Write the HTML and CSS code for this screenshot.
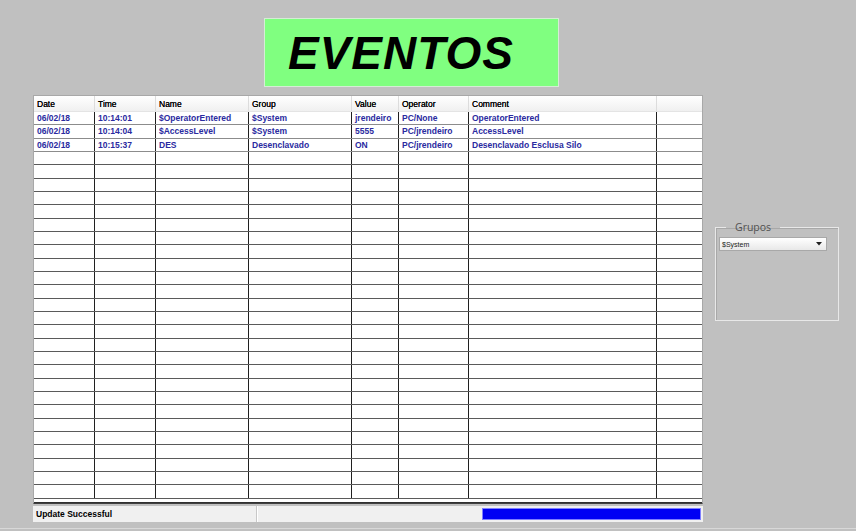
FILE: index.html
```html
<!DOCTYPE html>
<html>
<head>
<meta charset="utf-8">
<link rel="stylesheet" href="styles.css">
</head>
<body>
<div class="page">
  <div class="title-row">
    <div class="title">EVENTOS</div>
  </div>
  <div class="main">
    <div class="left">
      <div class="grid">
        <div class="row head">
          <div class="c">Date</div><div class="c">Time</div><div class="c">Name</div><div class="c">Group</div><div class="c">Value</div><div class="c">Operator</div><div class="c">Comment</div><div class="c"></div>
        </div>
        <div class="row data">
          <div class="c">06/02/18</div><div class="c">10:14:01</div><div class="c">$OperatorEntered</div><div class="c">$System</div><div class="c">jrendeiro</div><div class="c">PC/None</div><div class="c">OperatorEntered</div><div class="c"></div>
        </div>
        <div class="row data">
          <div class="c">06/02/18</div><div class="c">10:14:04</div><div class="c">$AccessLevel</div><div class="c">$System</div><div class="c">5555</div><div class="c">PC/jrendeiro</div><div class="c">AccessLevel</div><div class="c"></div>
        </div>
        <div class="row data">
          <div class="c">06/02/18</div><div class="c">10:15:37</div><div class="c">DES</div><div class="c">Desenclavado</div><div class="c">ON</div><div class="c">PC/jrendeiro</div><div class="c">Desenclavado Esclusa Silo</div><div class="c"></div>
        </div>
        <div class="row empty"><div class="c"></div><div class="c"></div><div class="c"></div><div class="c"></div><div class="c"></div><div class="c"></div><div class="c"></div><div class="c"></div></div>
        <div class="row empty"><div class="c"></div><div class="c"></div><div class="c"></div><div class="c"></div><div class="c"></div><div class="c"></div><div class="c"></div><div class="c"></div></div>
        <div class="row empty"><div class="c"></div><div class="c"></div><div class="c"></div><div class="c"></div><div class="c"></div><div class="c"></div><div class="c"></div><div class="c"></div></div>
        <div class="row empty"><div class="c"></div><div class="c"></div><div class="c"></div><div class="c"></div><div class="c"></div><div class="c"></div><div class="c"></div><div class="c"></div></div>
        <div class="row empty"><div class="c"></div><div class="c"></div><div class="c"></div><div class="c"></div><div class="c"></div><div class="c"></div><div class="c"></div><div class="c"></div></div>
        <div class="row empty"><div class="c"></div><div class="c"></div><div class="c"></div><div class="c"></div><div class="c"></div><div class="c"></div><div class="c"></div><div class="c"></div></div>
        <div class="row empty"><div class="c"></div><div class="c"></div><div class="c"></div><div class="c"></div><div class="c"></div><div class="c"></div><div class="c"></div><div class="c"></div></div>
        <div class="row empty"><div class="c"></div><div class="c"></div><div class="c"></div><div class="c"></div><div class="c"></div><div class="c"></div><div class="c"></div><div class="c"></div></div>
        <div class="row empty"><div class="c"></div><div class="c"></div><div class="c"></div><div class="c"></div><div class="c"></div><div class="c"></div><div class="c"></div><div class="c"></div></div>
        <div class="row empty"><div class="c"></div><div class="c"></div><div class="c"></div><div class="c"></div><div class="c"></div><div class="c"></div><div class="c"></div><div class="c"></div></div>
        <div class="row empty"><div class="c"></div><div class="c"></div><div class="c"></div><div class="c"></div><div class="c"></div><div class="c"></div><div class="c"></div><div class="c"></div></div>
        <div class="row empty"><div class="c"></div><div class="c"></div><div class="c"></div><div class="c"></div><div class="c"></div><div class="c"></div><div class="c"></div><div class="c"></div></div>
        <div class="row empty"><div class="c"></div><div class="c"></div><div class="c"></div><div class="c"></div><div class="c"></div><div class="c"></div><div class="c"></div><div class="c"></div></div>
        <div class="row empty"><div class="c"></div><div class="c"></div><div class="c"></div><div class="c"></div><div class="c"></div><div class="c"></div><div class="c"></div><div class="c"></div></div>
        <div class="row empty"><div class="c"></div><div class="c"></div><div class="c"></div><div class="c"></div><div class="c"></div><div class="c"></div><div class="c"></div><div class="c"></div></div>
        <div class="row empty"><div class="c"></div><div class="c"></div><div class="c"></div><div class="c"></div><div class="c"></div><div class="c"></div><div class="c"></div><div class="c"></div></div>
        <div class="row empty"><div class="c"></div><div class="c"></div><div class="c"></div><div class="c"></div><div class="c"></div><div class="c"></div><div class="c"></div><div class="c"></div></div>
        <div class="row empty"><div class="c"></div><div class="c"></div><div class="c"></div><div class="c"></div><div class="c"></div><div class="c"></div><div class="c"></div><div class="c"></div></div>
        <div class="row empty"><div class="c"></div><div class="c"></div><div class="c"></div><div class="c"></div><div class="c"></div><div class="c"></div><div class="c"></div><div class="c"></div></div>
        <div class="row empty"><div class="c"></div><div class="c"></div><div class="c"></div><div class="c"></div><div class="c"></div><div class="c"></div><div class="c"></div><div class="c"></div></div>
        <div class="row empty"><div class="c"></div><div class="c"></div><div class="c"></div><div class="c"></div><div class="c"></div><div class="c"></div><div class="c"></div><div class="c"></div></div>
        <div class="row empty"><div class="c"></div><div class="c"></div><div class="c"></div><div class="c"></div><div class="c"></div><div class="c"></div><div class="c"></div><div class="c"></div></div>
        <div class="row empty"><div class="c"></div><div class="c"></div><div class="c"></div><div class="c"></div><div class="c"></div><div class="c"></div><div class="c"></div><div class="c"></div></div>
        <div class="row empty"><div class="c"></div><div class="c"></div><div class="c"></div><div class="c"></div><div class="c"></div><div class="c"></div><div class="c"></div><div class="c"></div></div>
        <div class="row empty"><div class="c"></div><div class="c"></div><div class="c"></div><div class="c"></div><div class="c"></div><div class="c"></div><div class="c"></div><div class="c"></div></div>
        <div class="row empty"><div class="c"></div><div class="c"></div><div class="c"></div><div class="c"></div><div class="c"></div><div class="c"></div><div class="c"></div><div class="c"></div></div>
        <div class="filler"></div>
      </div>
      <div class="status">
        <div class="panel p1">Update Successful</div>
        <div class="panel p2"></div>
        <div class="panel p3"><div class="progress"></div></div>
      </div>
    </div>
    <div class="side">
      <fieldset class="groupbox">
        <legend>Grupos</legend>
        <div class="select">
          <span class="sel-text">$System</span>
          <svg class="arrow" width="6" height="4" viewBox="0 0 6 4"><path d="M0 0H6L3 3.5Z" fill="#202020"/></svg>
        </div>
      </fieldset>
    </div>
  </div>
  <div class="bottom-line"></div>
</div>
</body>
</html>
```

FILE: styles.css
```css
html, body {
  margin: 0;
  padding: 0;
}
body {
  background: #c0c0c0;
  font-family: "Liberation Sans", Arial, sans-serif;
  width: 856px;
  height: 531px;
  overflow: hidden;
}
.page {
  position: relative;
  width: 856px;
  height: 531px;
  padding-top: 18px;
  box-sizing: border-box;
}
.title-row {
  padding-left: 264px;
}
.title {
  width: 295px;
  height: 69px;
  box-sizing: border-box;
  background: #80ff80;
  border: 1px solid #d6ecd6;
  font-family: "Liberation Sans", Arial, sans-serif;
  font-weight: bold;
  font-style: italic;
  font-size: 46px;
  color: #000;
  line-height: 69px;
  padding-left: 23px;
  letter-spacing: 1px;
}
.main {
  display: flex;
  margin-top: 8px;
  padding-left: 33px;
}
.left {
  width: 670px;
}
.grid {
  width: 670px;
  background: #fff;
  border: 1px solid #a8a8a8;
  box-sizing: border-box;
  border-bottom: 1px solid #404040;
}
.row {
  display: grid;
  grid-template-columns: 61px 61px 93px 103px 47px 70px 188px 45px;
  font-size: 8.5px;
  font-weight: bold;
}
.row .c {
  box-sizing: border-box;
  border-right: 1px solid #202020;
  padding-left: 3px;
  white-space: nowrap;
  overflow: hidden;
  display: flex;
  align-items: center;
}
.row .c:last-child {
  border-right: none;
}
.head {
  height: 16px;
  background: linear-gradient(#ffffff, #f0f0f0);
  color: #000;
  font-weight: normal;
  border-bottom: 1px solid #e4e4e4;
  box-sizing: border-box;
  text-shadow: 0 0 0.3px #000;
}
.head .c {
  border-right: 1px solid #dcdcdc;
}
.data, .empty {
  height: 13.333px;
  box-sizing: border-box;
  border-bottom: 1px solid #8c8c8c;
}
.data {
  color: #2a2aa0;
}
.empty {
  border-bottom: 1px solid #5a5a5a;
}
.filler {
  height: 3.3px;
  border-bottom: 1px solid #303030;
}
.status {
  margin-top: 2px;
  height: 16px;
  display: flex;
  background: #f0f0f0;
}
.panel {
  box-sizing: border-box;
  height: 16px;
}
.p1 {
  width: 224px;
  border-right: 1px solid #c8c8c8;
  font-size: 8.5px;
  font-weight: bold;
  color: #000;
  padding-left: 3px;
  line-height: 16px;
}
.p2 {
  width: 225px;
  border-left: 1px solid #fff;
}
.p3 {
  flex: 1;
  padding: 2px 2px 2px 0;
}
.progress {
  height: 12px;
  box-sizing: border-box;
  background: #0000f4;
  border: 1px solid #7f7fff;
}
.side {
  padding-left: 12px;
  padding-top: 126px;
}
.groupbox {
  margin: 0;
  width: 124px;
  height: 100px;
  box-sizing: border-box;
  border: 1px solid #e8e8e8;
  outline: none;
  box-shadow: inset 1px 1px 0 #a8a8a8;
  padding: 4px 10px 0 3px;
}
.groupbox legend {
  font-family: "Open Sans", "Liberation Sans", sans-serif;
  font-size: 10.5px;
  color: #505050;
  padding: 0 9px;
  margin-left: 7px;
  line-height: 12px;
}
.select {
  height: 14px;
  width: 108px;
  box-sizing: border-box;
  background: linear-gradient(#ffffff, #e8e8e8);
  border: 1px solid #a8a8a8;
  display: flex;
  align-items: center;
  justify-content: space-between;
  padding: 0 4px 0 2px;
  font-size: 7px;
  color: #202020;
}
.bottom-line {
  position: absolute;
  left: 0;
  right: 0;
  top: 528px;
  height: 1px;
  background: #d8d8d8;
}
```
